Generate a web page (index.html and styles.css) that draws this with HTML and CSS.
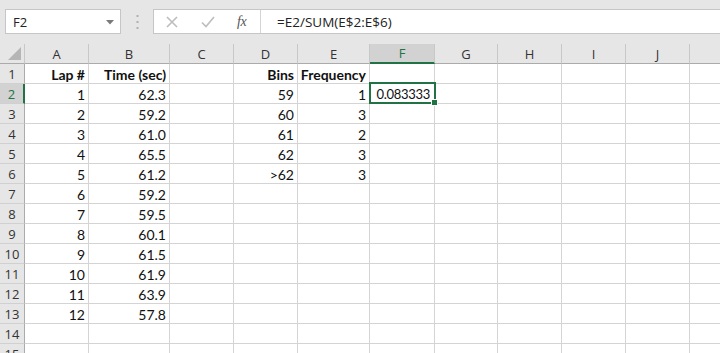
FILE: index.html
```html
<!DOCTYPE html>
<html>
<head>
<meta charset="utf-8">
<link rel="stylesheet" href="styles.css">
</head>
<body>
<div class="app">
  <div class="bar">
    <div class="namebox">
      <span class="name">F2</span>
      <svg class="caret" width="8" height="5" viewBox="0 0 8 5"><path d="M0 0h8L4 4.5z" fill="#7a7a7a"/></svg>
    </div>
    <svg class="dots" width="3" height="14" viewBox="0 0 3 14"><rect x="0.5" y="0" width="2" height="2" fill="#b0b0b0"/><rect x="0.5" y="6" width="2" height="2" fill="#b0b0b0"/><rect x="0.5" y="12" width="2" height="2" fill="#b0b0b0"/></svg>
    <div class="fbox">
      <div class="ficons">
        <svg width="12" height="12" viewBox="0 0 12 12"><path d="M1 1L11 11M11 1L1 11" stroke="#bdbdbd" stroke-width="1.6"/></svg>
        <svg width="14" height="12" viewBox="0 0 14 12"><path d="M1 6.5L5 10.5L13 1" stroke="#bdbdbd" stroke-width="1.6" fill="none"/></svg>
        <span class="fx">fx</span>
      </div>
      <div class="formula">=E2/SUM(E$2:E$6)</div>
    </div>
  </div>
  <div class="sheet">
    <div class="hd corner"><svg width="13" height="13" viewBox="0 0 13 13"><path d="M13 0V13H0z" fill="#b5b5b5"/></svg></div>
    <div class="hd">A</div><div class="hd">B</div><div class="hd">C</div><div class="hd">D</div><div class="hd">E</div><div class="hd sel">F</div><div class="hd">G</div><div class="hd">H</div><div class="hd">I</div><div class="hd">J</div><div class="hd"></div>

    <div class="rh">1</div><div class="c b">Lap #</div><div class="c b">Time (sec)</div><div class="c"></div><div class="c b">Bins</div><div class="c b">Frequency</div><div class="c"></div><div class="c"></div><div class="c"></div><div class="c"></div><div class="c"></div><div class="c"></div>

    <div class="rh sel">2</div><div class="c">1</div><div class="c">62.3</div><div class="c"></div><div class="c">59</div><div class="c">1</div><div class="c active"><span class="val">0.083333</span><span class="selbox"><span class="handle"></span></span></div><div class="c"></div><div class="c"></div><div class="c"></div><div class="c"></div><div class="c"></div>

    <div class="rh">3</div><div class="c">2</div><div class="c">59.2</div><div class="c"></div><div class="c">60</div><div class="c">3</div><div class="c"></div><div class="c"></div><div class="c"></div><div class="c"></div><div class="c"></div><div class="c"></div>

    <div class="rh">4</div><div class="c">3</div><div class="c">61.0</div><div class="c"></div><div class="c">61</div><div class="c">2</div><div class="c"></div><div class="c"></div><div class="c"></div><div class="c"></div><div class="c"></div><div class="c"></div>

    <div class="rh">5</div><div class="c">4</div><div class="c">65.5</div><div class="c"></div><div class="c">62</div><div class="c">3</div><div class="c"></div><div class="c"></div><div class="c"></div><div class="c"></div><div class="c"></div><div class="c"></div>

    <div class="rh">6</div><div class="c">5</div><div class="c">61.2</div><div class="c"></div><div class="c">&gt;62</div><div class="c">3</div><div class="c"></div><div class="c"></div><div class="c"></div><div class="c"></div><div class="c"></div><div class="c"></div>

    <div class="rh">7</div><div class="c">6</div><div class="c">59.2</div><div class="c"></div><div class="c"></div><div class="c"></div><div class="c"></div><div class="c"></div><div class="c"></div><div class="c"></div><div class="c"></div><div class="c"></div>

    <div class="rh">8</div><div class="c">7</div><div class="c">59.5</div><div class="c"></div><div class="c"></div><div class="c"></div><div class="c"></div><div class="c"></div><div class="c"></div><div class="c"></div><div class="c"></div><div class="c"></div>

    <div class="rh">9</div><div class="c">8</div><div class="c">60.1</div><div class="c"></div><div class="c"></div><div class="c"></div><div class="c"></div><div class="c"></div><div class="c"></div><div class="c"></div><div class="c"></div><div class="c"></div>

    <div class="rh">10</div><div class="c">9</div><div class="c">61.5</div><div class="c"></div><div class="c"></div><div class="c"></div><div class="c"></div><div class="c"></div><div class="c"></div><div class="c"></div><div class="c"></div><div class="c"></div>

    <div class="rh">11</div><div class="c">10</div><div class="c">61.9</div><div class="c"></div><div class="c"></div><div class="c"></div><div class="c"></div><div class="c"></div><div class="c"></div><div class="c"></div><div class="c"></div><div class="c"></div>

    <div class="rh">12</div><div class="c">11</div><div class="c">63.9</div><div class="c"></div><div class="c"></div><div class="c"></div><div class="c"></div><div class="c"></div><div class="c"></div><div class="c"></div><div class="c"></div><div class="c"></div>

    <div class="rh">13</div><div class="c">12</div><div class="c">57.8</div><div class="c"></div><div class="c"></div><div class="c"></div><div class="c"></div><div class="c"></div><div class="c"></div><div class="c"></div><div class="c"></div><div class="c"></div>

    <div class="rh">14</div><div class="c"></div><div class="c"></div><div class="c"></div><div class="c"></div><div class="c"></div><div class="c"></div><div class="c"></div><div class="c"></div><div class="c"></div><div class="c"></div><div class="c"></div>

    <div class="rh">15</div><div class="c"></div><div class="c"></div><div class="c"></div><div class="c"></div><div class="c"></div><div class="c"></div><div class="c"></div><div class="c"></div><div class="c"></div><div class="c"></div><div class="c"></div>
  </div>
</div>
</body>
</html>
```

FILE: styles.css
```css
html, body {
  margin: 0;
  padding: 0;
  width: 720px;
  height: 353px;
  overflow: hidden;
  background: #ffffff;
}
.app {
  width: 720px;
  height: 353px;
  overflow: hidden;
  display: flex;
  flex-direction: column;
}
.bar {
  height: 44px;
  box-sizing: border-box;
  background: #e6e6e6;
  display: flex;
  align-items: flex-start;
  padding: 9px 0 0 5px;
  flex: none;
}
.namebox {
  width: 116px;
  height: 25px;
  box-sizing: border-box;
  background: #fff;
  border: 1px solid #c6c6c6;
  display: flex;
  align-items: center;
  justify-content: space-between;
  padding: 0 6px 0 7px;
  font-family: "Open Sans", "Noto Sans", sans-serif;
  font-size: 13px;
  color: #222;
}
.caret { margin-top: 1px; }
.dots { margin: 6px 14px 0 15px; }
.fbox {
  flex: 1;
  height: 25px;
  box-sizing: border-box;
  background: #fff;
  border: 1px solid #c6c6c6;
  border-right: none;
  display: flex;
  align-items: center;
}
.ficons {
  width: 107px;
  height: 100%;
  box-sizing: border-box;
  border-right: 1px solid #d4d4d4;
  display: flex;
  align-items: center;
  padding-left: 12px;
}
.ficons svg:first-child { margin-right: 23px; }
.ficons svg:nth-child(2) { margin-right: 22px; }
.fx {
  font-family: "Liberation Serif", serif;
  font-style: italic;
  font-size: 14px;
  color: #555;
  letter-spacing: -0.5px;
}
.formula {
  padding-left: 16px;
  font-family: "Open Sans", "Noto Sans", sans-serif;
  font-size: 13.5px;
  color: #222;
}
.sheet {
  display: grid;
  grid-template-columns: 25px 64px 81px 64px 64px 72px 65px 63px 64px 64px 64px 64px;
  grid-auto-rows: 20px;
  font-family: "Lato", "Open Sans", sans-serif;
  font-size: 14px;
  color: #111;
}
.hd {
  background: #e6e6e6;
  border-right: 1px solid #c8c8c8;
  border-bottom: 1px solid #ababab;
  box-sizing: border-box;
  display: flex;
  align-items: center;
  justify-content: center;
  font-family: "Open Sans", "Noto Sans", sans-serif;
  font-size: 13px;
  color: #333;
}
.hd.corner {
  justify-content: flex-end;
  align-items: flex-end;
  padding: 0 3px 3px 0;
}
.hd.sel {
  background: #d2d2d2;
  color: #217346;
  border-bottom: 2px solid #217346;
}
.rh {
  background: #e6e6e6;
  border-right: 1px solid #ababab;
  border-bottom: 1px solid #d0d0d0;
  box-sizing: border-box;
  display: flex;
  align-items: center;
  justify-content: center;
  font-family: "Open Sans", "Noto Sans", sans-serif;
  font-size: 13px;
  color: #333;
}
.rh.sel {
  background: #d2d2d2;
  color: #217346;
  border-right: 2px solid #217346;
}
.c {
  border-right: 1px solid #d4d4d4;
  border-bottom: 1px solid #d4d4d4;
  box-sizing: border-box;
  display: flex;
  align-items: center;
  justify-content: flex-end;
  padding: 1px 3px 0 2px;
  white-space: nowrap;
  overflow: visible;
}
.c.b { font-weight: 700; }
.active { position: relative; padding-right: 4px; }
.val { font-size: 13px; letter-spacing: -0.3px; }
.selbox {
  position: absolute;
  left: -1px;
  top: -2px;
  right: -2px;
  bottom: -1px;
  border: 2px solid #217346;
  pointer-events: none;
}
.handle {
  position: absolute;
  right: -4px;
  bottom: -4px;
  width: 5px;
  height: 5px;
  background: #217346;
  border: 1px solid #fff;
}
```
